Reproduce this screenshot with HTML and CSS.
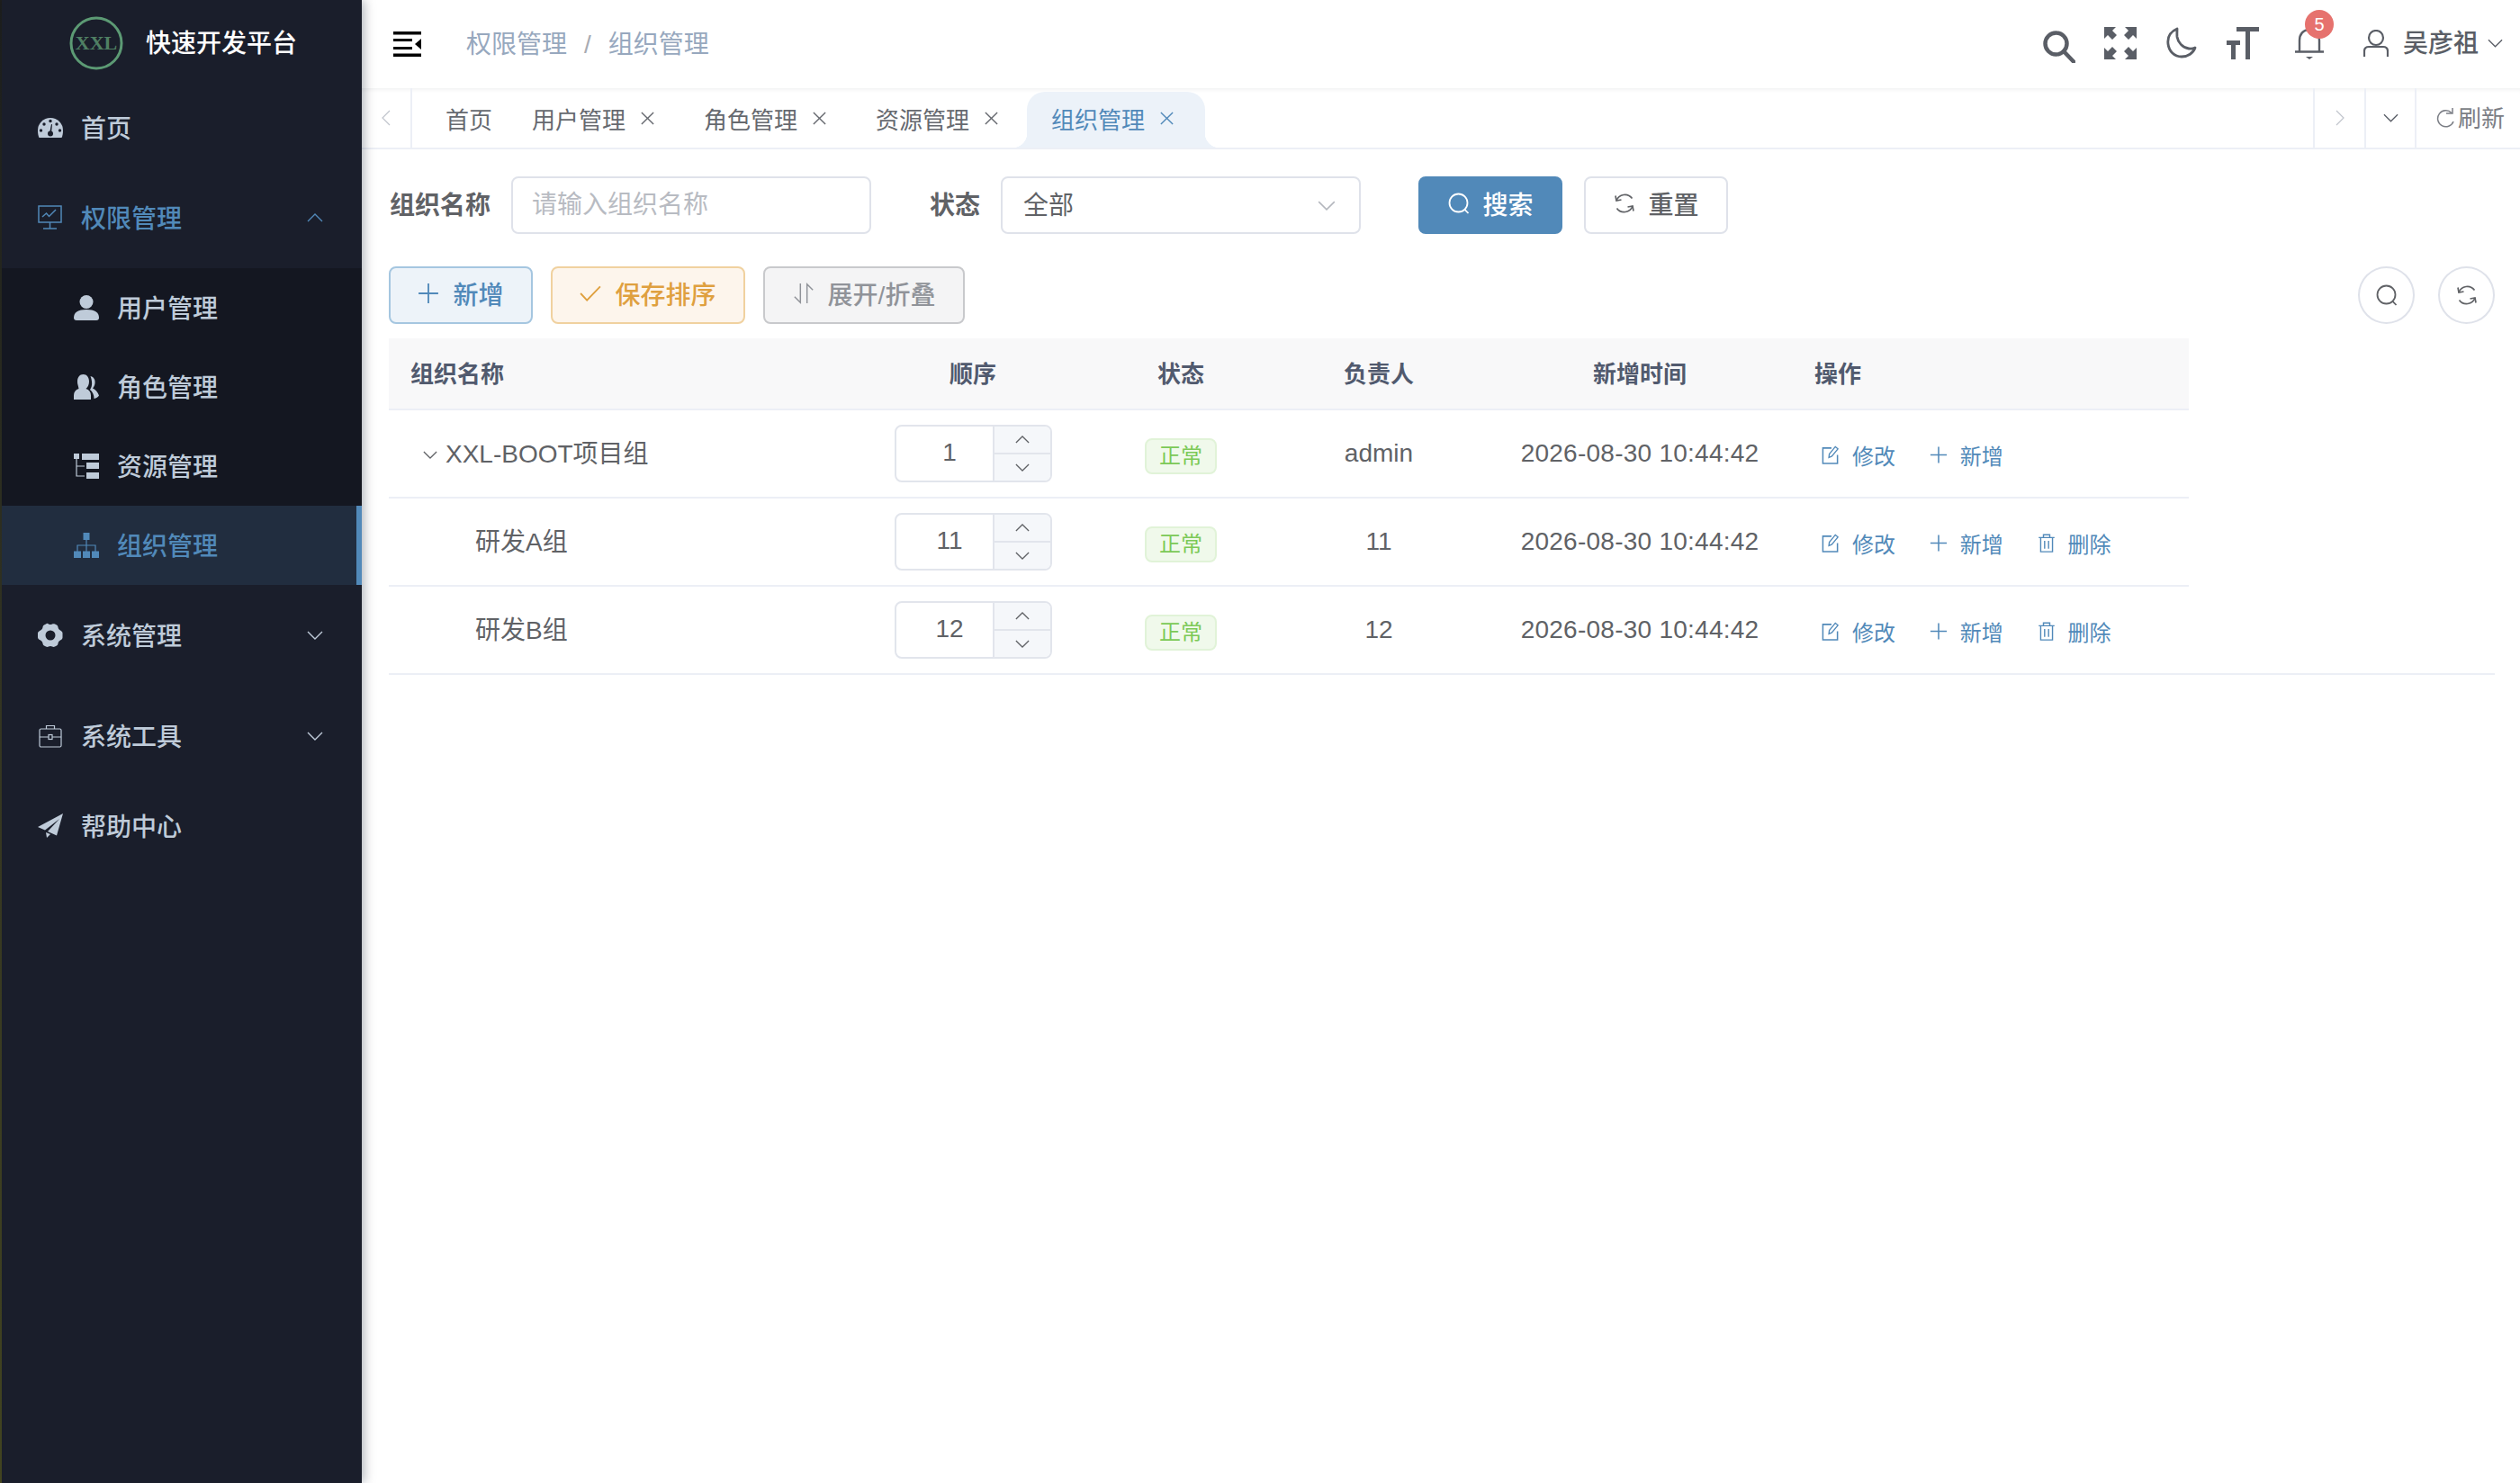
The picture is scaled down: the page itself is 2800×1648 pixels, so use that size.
FILE: index.html
```html
<!DOCTYPE html>
<html lang="zh-CN">
<head>
  <meta charset="UTF-8">
  <title>快速开发平台</title>
  <link rel="stylesheet" href="styles.css">
</head>
<body>
  <svg class="sprite" xmlns="http://www.w3.org/2000/svg">
    <symbol id="i-down" viewBox="0 0 18 10"><path d="M1 1l8 8 8-8" fill="none" stroke="currentColor" stroke-width="1.4"/></symbol>
    <symbol id="i-up" viewBox="0 0 18 10"><path d="M1 9l8-8 8 8" fill="none" stroke="currentColor" stroke-width="1.4"/></symbol>
    <symbol id="i-left" viewBox="0 0 10 18"><path d="M9 1L1 9l8 8" fill="none" stroke="currentColor" stroke-width="1.2"/></symbol>
    <symbol id="i-right" viewBox="0 0 10 18"><path d="M1 1l8 8-8 8" fill="none" stroke="currentColor" stroke-width="1.2"/></symbol>
    <symbol id="i-close" viewBox="0 0 18 18"><path d="M2 2l14 14M16 2L2 16" fill="none" stroke="currentColor" stroke-width="1.5"/></symbol>
    <symbol id="i-plus" viewBox="0 0 22 22"><path d="M11 1v20M1 11h20" fill="none" stroke="currentColor" stroke-width="1.7"/></symbol>
    <symbol id="i-check" viewBox="0 0 22 18"><path d="M1 9l6.500 7L21 2" fill="none" stroke="currentColor" stroke-width="1.7"/></symbol>
    <symbol id="i-sort" viewBox="0 0 24 26"><path d="M8 1v23L1 17M16 25V2l7 7" fill="none" stroke="currentColor" stroke-width="1.6"/></symbol>
    <symbol id="i-find" viewBox="0 0 24 24"><circle cx="11.500" cy="11.500" r="10" fill="none" stroke="currentColor" stroke-width="1.8"/><path d="M18.500 18.800l4 4.200" fill="none" stroke="currentColor" stroke-width="1.8"/></symbol>
    <symbol id="i-sync" viewBox="0 0 24 24"><path d="M3 9A10 10 0 0 1 20.500 6.500M21 15A10 10 0 0 1 3.500 17.500" fill="none" stroke="currentColor" stroke-width="1.700"/><path d="M2 3.500l1 5.500 5.500-1M22 20.500l-1-5.500-5.500 1" fill="none" stroke="currentColor" stroke-width="1.700"/></symbol>
    <symbol id="i-edit" viewBox="0 0 20 22"><path d="M11 3H1v18h17V11" fill="none" stroke="currentColor" stroke-width="1.600"/><path d="M8 14l.500-4 7-8.500 3 2.500-7 8.500z" fill="none" stroke="currentColor" stroke-width="1.400"/></symbol>
    <symbol id="i-trash" viewBox="0 0 22 24"><path d="M1 5h20M7 5V1.500h8V5M3.500 5v18h15V5M8.500 9v10M13.500 9v10" fill="none" stroke="currentColor" stroke-width="1.600"/></symbol>
    <symbol id="i-person" viewBox="0 0 28 28"><circle cx="14" cy="7.500" r="7.500" fill="currentColor"/><path d="M0 25c0-6 5-9 14-9s14 3 14 9c0 2-1 3-3 3H3c-2 0-3-1-3-3z" fill="currentColor"/></symbol>
    <symbol id="i-people" viewBox="0 0 28 28"><path d="M10.500 0c4 0 6.500 3.500 6.500 8 0 3.500-1.500 6.500-3.500 8 3.500 1 5.500 3.500 5.500 7.500V28H0v-4.500c0-4 2-6.500 5.500-7.500C5 12 4 11.500 4 8c0-4.500 2.500-8 6.500-8z" fill="currentColor"/><path d="M18.500 2c4 1 5.500 4 5 8-.3 2.500-1.500 4.500-2.500 5.500 3 1.500 5.500 4 7 8-1 2-3 3-5.500 3.500 0-4-1.500-7.500-4.500-10 1.500-2 2.500-5 2-9-.2-2-.7-4-1.500-6z" fill="currentColor"/></symbol>
    <symbol id="i-tree" viewBox="0 0 28 28"><path d="M0 0h6v6H0zM9 0h19v7H9zM14 10h14v7H14zM14 21h14v7H14z" fill="currentColor"/><path d="M3 6v19h9M3 14h9" fill="none" stroke="currentColor" stroke-width="1.200"/></symbol>
    <symbol id="i-org" viewBox="0 0 28 28"><path d="M10.500 0h7v8h-7zM0 20.500h8V28H0zM10 20.500h8V28h-8zM20 20.500h8V28h-8z" fill="currentColor"/><path d="M14 8v13M4 21v-7h20v7" fill="none" stroke="currentColor" stroke-width="1.200"/></symbol>
  </svg>

  <div class="app">
    <aside class="sidebar">
      <div class="logo">
        <svg class="logo-mark" viewBox="0 0 60 60">
          <circle cx="30" cy="30" r="28" fill="none" stroke="#5c9a74" stroke-width="3"/>
          <text x="30" y="37" text-anchor="middle" class="logo-text">XXL</text>
        </svg>
        <span class="logo-title">快速开发平台</span>
      </div>
      <nav>
        <a class="menu-item">
          <svg class="menu-icon" viewBox="0 0 28 22">
            <path d="M1.500 22C.5 20 0 17.500 0 14a14 14 0 0 1 28 0c0 3.500-.5 6-1.500 8z" fill="currentColor"/>
            <g fill="#1a1e2b"><circle cx="7" cy="7" r="1.700"/><circle cx="21" cy="7" r="1.700"/><circle cx="14" cy="3.500" r="1.700"/><circle cx="3.500" cy="14" r="1.700"/><circle cx="24.500" cy="14" r="1.700"/><circle cx="14" cy="17.500" r="3"/><path d="M13 17l2-10 1 .3-1 10z"/></g>
          </svg>
          <span>首页</span>
        </a>
        <a class="menu-item menu-parent is-open">
          <svg class="menu-icon" viewBox="0 0 28 28" fill="none" stroke="currentColor" stroke-width="1.500">
            <path d="M1 1h25v18H1zM13.500 19v7M6 26h15"/>
            <path d="M5 13l4.500-4 3 3.500L20 5"/>
          </svg>
          <span>权限管理</span>
          <svg class="menu-arrow"><use href="#i-up"/></svg>
        </a>
        <div class="submenu">
          <a class="sub-item"><svg class="menu-icon"><use href="#i-person"/></svg><span>用户管理</span></a>
          <a class="sub-item"><svg class="menu-icon"><use href="#i-people"/></svg><span>角色管理</span></a>
          <a class="sub-item"><svg class="menu-icon"><use href="#i-tree"/></svg><span>资源管理</span></a>
          <a class="sub-item is-active"><svg class="menu-icon"><use href="#i-org"/></svg><span>组织管理</span></a>
        </div>
        <a class="menu-item menu-parent">
          <svg class="menu-icon" viewBox="0 0 28 28">
            <path fill-rule="evenodd" fill="currentColor" d="M9 1.500c1-1 2-1 3 0 1.300.8 2.700.8 4 0 1-.5 2-.5 3 0l2 1c1 .5 1.300 1.500 1.500 2.500.2 1.500 1 2.700 2.500 3.500 1 .5 2.500 1.500 2.500 3v5c0 1.500-1.500 2.500-2.500 3-1.500.8-2.300 2-2.500 3.500-.2 1-.5 2-1.500 2.500l-2 1c-1 .5-2 .5-3 0-1.300-.8-2.700-.8-4 0-1 .5-2 .5-3 0l-2-1c-1-.5-1.300-1.500-1.500-2.500C5.300 21.500 4.500 20.300 3 19.500 2 19 0 18 0 16.500v-5C0 10 2 9 3 8.500 4.500 7.700 5.300 6.500 5.500 5c.2-1 .5-2 1.500-2.500zM14 8.500a5.500 5.500 0 1 0 0 11 5.500 5.500 0 0 0 0-11z"/>
          </svg>
          <span>系统管理</span>
          <svg class="menu-arrow"><use href="#i-down"/></svg>
        </a>
        <a class="menu-item menu-parent">
          <svg class="menu-icon" viewBox="0 0 28 28" fill="none" stroke="currentColor" stroke-width="1.200">
            <rect x="2" y="6" width="24" height="20" rx="1.500"/>
            <path d="M9.500 6V2.500h9V6M2 15h10M16 15h10"/>
            <rect x="12" y="12.500" width="4" height="5"/>
          </svg>
          <span>系统工具</span>
          <svg class="menu-arrow"><use href="#i-down"/></svg>
        </a>
        <a class="menu-item">
          <svg class="menu-icon" viewBox="0 0 28 28">
            <path fill="currentColor" d="M28 0L0 15l8 3.500L24 6 11 20l10 4.500zM9 21l1 6 4-4z"/>
          </svg>
          <span>帮助中心</span>
        </a>
      </nav>
    </aside>

    <main class="main">
      <header class="navbar">
        <svg class="hamburger" viewBox="0 0 31 28">
          <path d="M0 0h31v3.500H0zM0 8h21v3H0zM0 17h21v3H0zM0 24.500h31V28H0z" fill="#000"/>
          <path d="M31 8v12l-7-6z" fill="#000"/>
        </svg>
        <div class="breadcrumb">
          <span>权限管理</span>
          <span class="breadcrumb-sep">/</span>
          <span>组织管理</span>
        </div>
        <div class="navbar-right">
          <svg class="nav-icon nav-search" viewBox="0 0 36 36" fill="none" stroke="currentColor" stroke-width="4.500">
            <circle cx="14.500" cy="14.500" r="12"/>
            <path d="M23 23l11 11.500" stroke-linecap="round"/>
          </svg>
          <svg class="nav-icon" viewBox="0 0 36 36" fill="currentColor">
            <path d="M0 0h13l-4 4 5 5-5 5-5-5-4 4zM36 0v13l-4-4-5 5-5-5 5-5-4-4zM0 36V23l4 4 5-5 5 5-5 5 4 4zM36 36H23l4-4-5-5 5-5 5 5 4-4z"/>
          </svg>
          <svg class="nav-icon" viewBox="0 0 36 36" fill="none" stroke="currentColor" stroke-width="2.800">
            <path d="M13 2C6 5 2 11 3 19c1 8 7 14 15 14 7 0 13-4 15-10-2 1-4 1.500-7 1-7-1-12-7-13-13-.3-3 0-6 0-9z" stroke-linejoin="round"/>
          </svg>
          <svg class="nav-icon" viewBox="0 0 36 36" fill="currentColor">
            <path d="M11 0h25v5H26v31h-5V5H11zM0 15h15v5H10v16H5V20H0z"/>
          </svg>
          <div class="nav-bell">
            <svg class="nav-icon" viewBox="0 0 36 36" fill="none" stroke="currentColor" stroke-width="2.400">
              <path d="M7 27V15C7 8 11 3 18 3s11 5 11 12v12M2 27.500h32"/>
              <path d="M14 33h8l-4 3z" fill="currentColor" stroke="none"/>
            </svg>
            <span class="badge">5</span>
          </div>
          <div class="nav-user">
            <svg class="user-icon" viewBox="0 0 28 30" fill="none" stroke="currentColor" stroke-width="2.200">
              <circle cx="14" cy="9" r="8"/>
              <path d="M1 30v-6c0-3 2-5 5-5h16c3 0 5 2 5 5v6"/>
            </svg>
            <span class="user-name">吴彦祖</span>
            <svg class="user-arrow"><use href="#i-down"/></svg>
          </div>
        </div>
      </header>

      <div class="tagsbar">
        <div class="tags-cell tags-prev"><svg class="tags-arrow"><use href="#i-left"/></svg></div>
        <div class="tags">
          <a class="tag-tab tag-home">首页</a>
          <a class="tag-tab">用户管理<svg class="tag-close"><use href="#i-close"/></svg></a>
          <a class="tag-tab">角色管理<svg class="tag-close"><use href="#i-close"/></svg></a>
          <a class="tag-tab">资源管理<svg class="tag-close"><use href="#i-close"/></svg></a>
          <a class="tag-tab is-active">组织管理<svg class="tag-close"><use href="#i-close"/></svg></a>
        </div>
        <div class="tags-cell tags-next"><svg class="tags-arrow"><use href="#i-right"/></svg></div>
        <div class="tags-cell tags-more"><svg class="tags-down"><use href="#i-down"/></svg></div>
        <div class="tags-cell tags-refresh">
          <svg class="refresh-icon" viewBox="0 0 20 22" fill="none" stroke="currentColor" stroke-width="1.500">
            <path d="M17 5.500A9 9 0 1 0 19 15"/><path d="M11 6h7V0"/>
          </svg>
          <span>刷新</span>
        </div>
      </div>

      <section class="content">
        <form class="search-form">
          <label class="form-label">组织名称</label>
          <input class="form-input" type="text" placeholder="请输入组织名称">
          <label class="form-label form-label-status">状态</label>
          <div class="form-select">
            <span>全部</span>
            <svg class="select-arrow"><use href="#i-down"/></svg>
          </div>
          <button class="btn btn-primary" type="button"><svg class="btn-icon"><use href="#i-find"/></svg>搜索</button>
          <button class="btn btn-default" type="button"><svg class="btn-icon"><use href="#i-sync"/></svg>重置</button>
        </form>

        <div class="toolbar">
          <button class="btn btn-add" type="button"><svg class="btn-icon"><use href="#i-plus"/></svg>新增</button>
          <button class="btn btn-save" type="button"><svg class="btn-icon"><use href="#i-check"/></svg>保存排序</button>
          <button class="btn btn-toggle" type="button"><svg class="btn-icon"><use href="#i-sort"/></svg>展开/折叠</button>
          <div class="toolbar-right">
            <button class="btn-circle" type="button"><svg class="circle-icon"><use href="#i-find"/></svg></button>
            <button class="btn-circle" type="button"><svg class="circle-icon"><use href="#i-sync"/></svg></button>
          </div>
        </div>

        <div class="table-wrap">
          <table class="table">
            <colgroup>
              <col class="col-name"><col class="col-sort"><col class="col-status"><col class="col-owner"><col class="col-time"><col>
            </colgroup>
            <thead>
              <tr>
                <th class="cell-name">组织名称</th>
                <th>顺序</th>
                <th>状态</th>
                <th>负责人</th>
                <th>新增时间</th>
                <th class="cell-ops">操作</th>
              </tr>
            </thead>
            <tbody>
              <tr>
                <td class="cell-name"><svg class="tree-arrow"><use href="#i-down"/></svg>XXL-BOOT项目组</td>
                <td><div class="number"><span class="number-value">1</span><div class="number-ctrl"><span><svg class="number-arrow"><use href="#i-up"/></svg></span><span><svg class="number-arrow"><use href="#i-down"/></svg></span></div></div></td>
                <td class="cell-tag"><span class="tag-ok">正常</span></td>
                <td>admin</td>
                <td class="cell-time">2026-08-30 10:44:42</td>
                <td class="cell-ops">
                  <a class="op"><svg class="op-icon"><use href="#i-edit"/></svg>修改</a>
                  <a class="op"><svg class="op-icon"><use href="#i-plus"/></svg>新增</a>
                </td>
              </tr>
              <tr>
                <td class="cell-name cell-child">研发A组</td>
                <td><div class="number"><span class="number-value">11</span><div class="number-ctrl"><span><svg class="number-arrow"><use href="#i-up"/></svg></span><span><svg class="number-arrow"><use href="#i-down"/></svg></span></div></div></td>
                <td class="cell-tag"><span class="tag-ok">正常</span></td>
                <td>11</td>
                <td class="cell-time">2026-08-30 10:44:42</td>
                <td class="cell-ops">
                  <a class="op"><svg class="op-icon"><use href="#i-edit"/></svg>修改</a>
                  <a class="op"><svg class="op-icon"><use href="#i-plus"/></svg>新增</a>
                  <a class="op"><svg class="op-icon"><use href="#i-trash"/></svg>删除</a>
                </td>
              </tr>
              <tr>
                <td class="cell-name cell-child">研发B组</td>
                <td><div class="number"><span class="number-value">12</span><div class="number-ctrl"><span><svg class="number-arrow"><use href="#i-up"/></svg></span><span><svg class="number-arrow"><use href="#i-down"/></svg></span></div></div></td>
                <td class="cell-tag"><span class="tag-ok">正常</span></td>
                <td>12</td>
                <td class="cell-time">2026-08-30 10:44:42</td>
                <td class="cell-ops">
                  <a class="op"><svg class="op-icon"><use href="#i-edit"/></svg>修改</a>
                  <a class="op"><svg class="op-icon"><use href="#i-plus"/></svg>新增</a>
                  <a class="op"><svg class="op-icon"><use href="#i-trash"/></svg>删除</a>
                </td>
              </tr>
            </tbody>
          </table>
        </div>
      </section>
    </main>
  </div>
</body>
</html>
```

FILE: styles.css
```css
* {
  margin: 0;
  padding: 0;
  box-sizing: border-box;
}

body {
  font-family: "Liberation Sans", "Noto Sans CJK SC", sans-serif;
  color: #606266;
  background: #fff;
  overflow: hidden;
}

.sprite {
  display: none;
}

.app {
  display: flex;
  height: 100vh;
  padding-left: 2px;
  background: linear-gradient(#1f1f1c, #3b3a22 50%, #4a4a20);
}

/* Sidebar */
.sidebar {
  flex: none;
  width: 400px;
  background: #1a1e2b;
  color: #bfcbd9;
  font-size: 28px;
  font-weight: 500;
  box-shadow: 2px 0 12px rgba(0, 21, 41, 0.35);
  z-index: 2;
}

.logo {
  display: flex;
  align-items: center;
  height: 98px;
  padding-left: 75px;
  padding-bottom: 2px;
}

.logo-mark {
  width: 60px;
  height: 60px;
  margin-right: 25px;
}

.logo-text {
  font-family: "Liberation Serif", serif;
  font-size: 22px;
  font-weight: 700;
  fill: #4f7f63;
}

.logo-title {
  padding-bottom: 4px;
  color: #fff;
}

.menu-item,
.sub-item {
  display: flex;
  align-items: center;
  height: 88px;
  padding-left: 40px;
}

.menu-item span,
.sub-item span {
  padding-bottom: 3px;
}

.menu-parent {
  height: 112px;
}

.menu-parent.is-open {
  color: #5189b9;
}

.menu-icon {
  flex: none;
  width: 28px;
  height: 28px;
  margin-right: 20px;
}

.menu-arrow {
  width: 18px;
  height: 10px;
  margin-left: auto;
  margin-right: 43px;
}

.submenu {
  background: #141721;
}

.sub-item {
  padding-left: 80px;
}

.sub-item .menu-icon {
  margin-right: 20px;
}

.sub-item.is-active {
  color: #5189b9;
  background: #212d3f;
  border-right: 6px solid #5189b9;
}

/* Main column */
.main {
  flex: 1;
  min-width: 0;
  background: #fff;
}

.navbar {
  display: flex;
  align-items: center;
  height: 98px;
  padding-left: 35px;
}

.hamburger {
  width: 31px;
  height: 28px;
  margin-right: 50px;
}

.breadcrumb {
  display: flex;
  align-items: baseline;
  padding-bottom: 4px;
  font-size: 28px;
  color: #97a8be;
}

.breadcrumb-sep {
  margin: 0 19px;
  color: #a8abb2;
}

.navbar-right {
  display: flex;
  align-items: center;
  gap: 32px;
  margin-left: auto;
  padding-bottom: 2px;
  color: #5a5e66;
}

.nav-icon {
  display: block;
  width: 36px;
  height: 36px;
}

.nav-search {
  margin-top: 8px;
}

.nav-bell {
  position: relative;
  margin-left: 6px;
}

.badge {
  position: absolute;
  left: 13px;
  top: -19px;
  width: 32px;
  height: 32px;
  border-radius: 50%;
  background: #e6726e;
  color: #fff;
  font-size: 20px;
  line-height: 32px;
  text-align: center;
}

.nav-user {
  display: flex;
  align-items: center;
  margin-left: 10px;
  margin-right: 19px;
}

.user-icon {
  width: 28px;
  height: 30px;
  margin-right: 16px;
}

.user-name {
  padding-bottom: 4px;
  font-size: 28px;
  font-weight: 500;
}

.user-arrow {
  width: 17px;
  height: 10px;
  margin-left: 10px;
}

/* Tags bar */
.tagsbar {
  display: flex;
  height: 68px;
  border-bottom: 2px solid #eceff6;
  box-shadow: inset 0 5px 5px -4px rgba(0, 21, 41, 0.08);
  font-size: 26px;
}

.tags-cell {
  display: flex;
  align-items: center;
  justify-content: center;
  flex: none;
  border-right: 2px solid #eceff6;
}

.tags-prev {
  width: 56px;
}

.tags-next {
  width: 59px;
  border-left: 2px solid #eceff6;
}

.tags-more {
  width: 56px;
}

.tags-refresh {
  justify-content: flex-start;
  width: 115px;
  padding-left: 22px;
  border-right: none;
  color: #7b7e85;
}

.tags-refresh span {
  padding-bottom: 4px;
}

.tags-arrow {
  width: 10px;
  height: 18px;
  color: #c0c4cc;
}

.tags-down {
  width: 17px;
  height: 10px;
  color: #5a5e66;
}

.refresh-icon {
  width: 20px;
  height: 22px;
  margin-right: 4px;
}

.tags {
  display: flex;
  flex: 1;
  padding-left: 9px;
  padding-top: 4px;
  min-width: 0;
}

.tag-tab {
  position: relative;
  display: flex;
  align-items: center;
  padding: 0 26px 3px 28px;
  color: #66696f;
}

.tag-home {
  padding-right: 16px;
}

.tag-close {
  width: 17px;
  height: 17px;
  margin-left: 16px;
}

.tag-tab.is-active {
  margin-left: 5px;
  padding-right: 34px;
  padding-left: 27px;
  color: #5189b9;
  background: #ecf2f9;
  border-radius: 20px 20px 0 0;
}

.tag-tab.is-active::before,
.tag-tab.is-active::after {
  content: "";
  position: absolute;
  bottom: 0;
  width: 16px;
  height: 16px;
}

.tag-tab.is-active::before {
  left: -16px;
  background: radial-gradient(circle at 0 0, transparent 16px, #ecf2f9 16.500px);
}

.tag-tab.is-active::after {
  right: -16px;
  background: radial-gradient(circle at 100% 0, transparent 16px, #ecf2f9 16.500px);
}

/* Content */
.content {
  padding: 30px 28px 0 30px;
}

.search-form {
  display: flex;
  align-items: center;
  height: 64px;
  margin-bottom: 36px;
  font-size: 28px;
}

.form-label {
  padding: 0 0 4px 1px;
  margin-right: 23px;
  font-weight: 700;
  color: #606266;
}

.form-label-status {
  margin-left: 64px;
}

.form-input,
.form-select {
  width: 400px;
  height: 64px;
  border: 2px solid #dfe2ea;
  border-radius: 8px;
  font: inherit;
  color: #606266;
}

.form-input {
  padding-left: 21px;
  outline: none;
}

.form-input::placeholder {
  color: #b8bbc2;
}

.form-select {
  display: flex;
  align-items: center;
  justify-content: space-between;
  padding: 0 26px 0 23px;
}

.form-select span {
  padding-bottom: 4px;
}

.select-arrow {
  width: 20px;
  height: 11px;
  color: #b4b7be;
}

.btn {
  display: inline-flex;
  align-items: center;
  justify-content: center;
  height: 64px;
  padding-bottom: 4px;
  border: 2px solid #dfe2ea;
  border-radius: 8px;
  background: #fff;
  font: inherit;
  font-size: 28px;
  font-weight: 500;
  color: #606266;
}

.btn-icon {
  width: 24px;
  height: 24px;
  margin-right: 15px;
}

.btn-primary {
  width: 160px;
  margin-left: 64px;
  background: #5189b9;
  border-color: #5189b9;
  color: #fff;
}

.btn-default {
  width: 160px;
  margin-left: 24px;
}

.toolbar {
  display: flex;
  align-items: center;
  gap: 20px;
  margin-bottom: 16px;
}

.btn-add {
  width: 160px;
  background: #edf3f9;
  border-color: #a5c6e0;
  color: #5189b9;
}

.btn-save {
  width: 216px;
  background: #fdf5ec;
  border-color: #f0d19f;
  color: #dfa03f;
}

.btn-toggle {
  width: 224px;
  background: #f4f4f5;
  border-color: #c8c9cc;
  color: #909399;
}

.toolbar-right {
  display: flex;
  gap: 26px;
  margin-left: auto;
}

.btn-circle {
  display: flex;
  align-items: center;
  justify-content: center;
  width: 63px;
  height: 64px;
  border: 2px solid #dfe2ea;
  border-radius: 50%;
  background: #fff;
  color: #606266;
}

.circle-icon {
  width: 24px;
  height: 24px;
}

/* Table */
.table-wrap {
  border-bottom: 2px solid #eceff6;
}

.table {
  width: 2000px;
  table-layout: fixed;
  border-collapse: collapse;
  font-size: 28px;
}

.col-name {
  width: 530px;
}

.col-sort {
  width: 238px;
}

.col-status {
  width: 224px;
}

.col-owner {
  width: 216px;
}

.col-time {
  width: 364px;
}

.table th {
  height: 79px;
  padding-bottom: 4px;
  background: #f8f8f9;
  border-bottom: 2px solid #eceff6;
  font-size: 26px;
  font-weight: 700;
  color: #515a6e;
  text-align: center;
}

.table td {
  height: 98px;
  border-bottom: 2px solid #eceff6;
  text-align: center;
}

.table tr:last-child td {
  border-bottom: none;
  height: 97px;
}

.table .cell-name {
  padding-left: 24px;
  text-align: left;
}

.table td.cell-name {
  padding-bottom: 4px;
}

.table .cell-child {
  padding-left: 96px;
}

.table .cell-ops {
  padding-left: 12px;
  text-align: left;
}

.table td.cell-ops {
  padding-left: 20px;
  padding-top: 2px;
}

.table td.cell-tag {
  padding-top: 6px;
}

.cell-time {
  letter-spacing: 0.25px;
}

.tree-arrow {
  width: 16px;
  height: 9px;
  margin-left: 14px;
  margin-right: 9px;
  vertical-align: 4px;
}

.number {
  display: flex;
  width: 175px;
  height: 64px;
  margin: 0 auto;
  border: 2px solid #e2e5ec;
  border-radius: 8px;
  overflow: hidden;
}

.number-value {
  flex: 1;
  padding-left: 12px;
  line-height: 58px;
  text-align: center;
}

.number-ctrl {
  display: flex;
  flex-direction: column;
  width: 64px;
  border-left: 2px solid #e2e5ec;
  background: #f5f7fa;
}

.number-ctrl span {
  display: flex;
  align-items: center;
  justify-content: center;
  flex: 1;
}

.number-ctrl span + span {
  border-top: 2px solid #e2e5ec;
}

.number-arrow {
  width: 16px;
  height: 9px;
}

.tag-ok {
  display: inline-block;
  width: 80px;
  height: 40px;
  border: 2px solid #e1f3d8;
  border-radius: 8px;
  background: #f0f9eb;
  color: #7cc957;
  font-size: 24px;
  line-height: 36px;
}

.op {
  display: inline-flex;
  align-items: center;
  margin-right: 30px;
  font-size: 24px;
  color: #5189b9;
}

.op-icon {
  width: 20px;
  height: 21px;
  margin-right: 14px;
}
```
